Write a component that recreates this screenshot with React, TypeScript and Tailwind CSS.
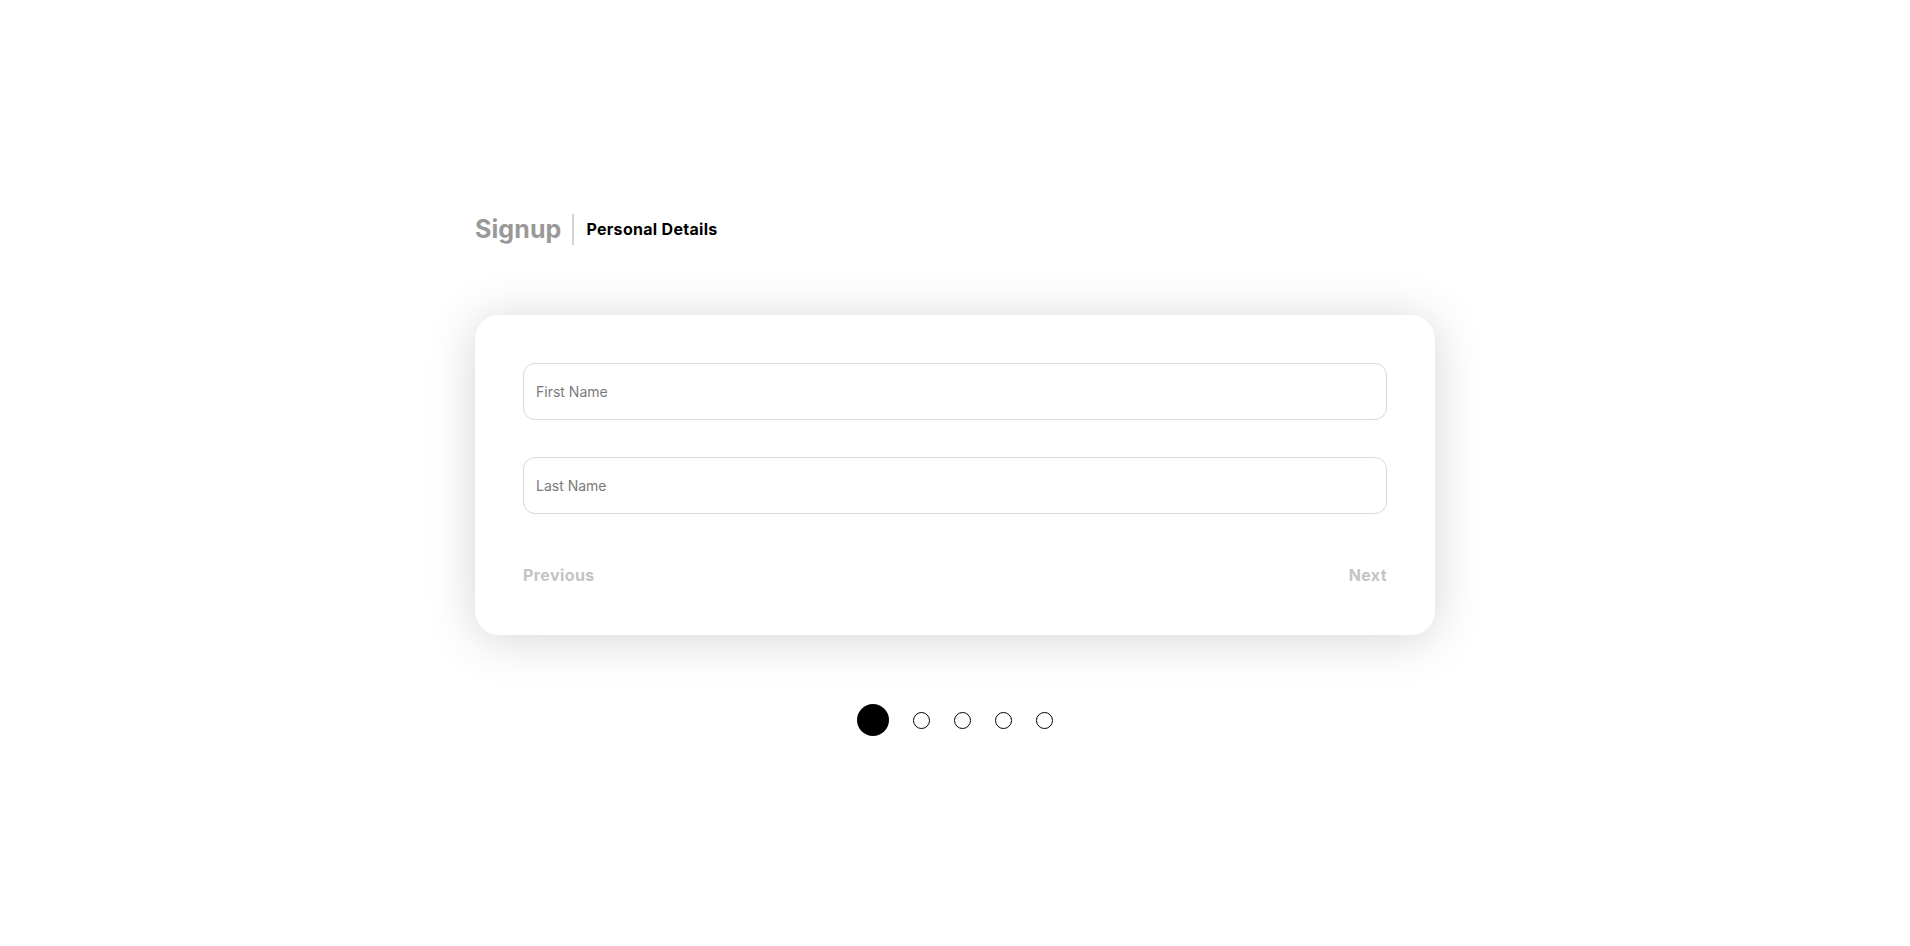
export default function App() {
  const steps = [0, 1, 2, 3, 4]
  const current = 0

  return (
    <div className="min-h-screen bg-white" style={{ fontFamily: "Inter, 'Noto Sans', sans-serif" }}>
      <div className="mx-auto w-[960px] pt-[211px]">
        <div className="flex h-[36px] items-center">
          <h1 className="text-[25px] font-bold leading-[36px] tracking-[0.1px] text-[#999999]">Signup</h1>
          <div className="ml-[11px] mr-[12px] h-[31px] w-[2px] bg-[#d4d4d4]" />
          <h2 className="text-[16px] font-bold leading-[24px] tracking-[0.3px] text-black">Personal Details</h2>
        </div>

        <div className="mt-[68px] h-[320px] rounded-[24px] bg-white p-[48px] shadow-[0_4px_48px_rgba(0,0,0,0.17)]">
          <div className="flex flex-col gap-[37px]">
            <input
              type="text"
              placeholder="First Name"
              className="h-[57px] w-full rounded-[12px] border border-[#d9d9d9] px-[12px] text-[14px] text-black outline-none placeholder:text-[#7a7a7a]"
            />
            <input
              type="text"
              placeholder="Last Name"
              className="h-[57px] w-full rounded-[12px] border border-[#d9d9d9] px-[12px] text-[14px] text-black outline-none placeholder:text-[#7a7a7a]"
            />
          </div>
          <div className="mt-[49px] flex h-[24px] items-center justify-between">
            <button className="text-[16px] font-bold leading-[24px] tracking-[0.4px] text-[#c4c4c4]">Previous</button>
            <button className="text-[16px] font-bold leading-[24px] tracking-[0.4px] text-[#c4c4c4]">Next</button>
          </div>
        </div>

        <div className="mt-[69px] flex items-center justify-center gap-6">
          {steps.map((s) =>
            s === current ? (
              <div key={s} className="h-[32px] w-[32px] rounded-full bg-black" />
            ) : (
              <div key={s} className="h-[17px] w-[17px] rounded-full border-[1.5px] border-black" />
            )
          )}
        </div>
      </div>
    </div>
  )
}
